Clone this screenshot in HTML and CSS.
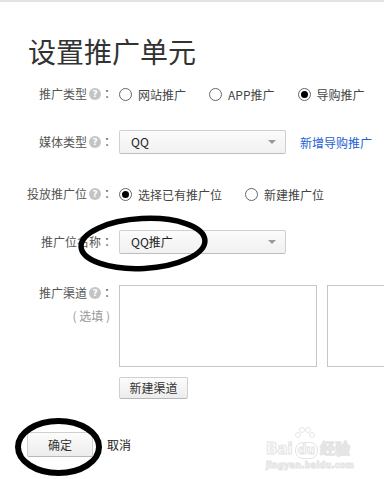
FILE: index.html
```html
<!DOCTYPE html>
<html lang="zh-CN">
<head>
  <meta charset="UTF-8">
  <meta name="viewport" content="width=device-width, initial-scale=1.0">
  <link rel="stylesheet" href="styles.css">
</head>
<body>
  <div class="page">
    <h1 class="title">设置推广单元</h1>

    <div class="form">
      <div class="row row-type">
        <div class="label">推广类型<span class="help">?</span><span class="colon">：</span></div>
        <div class="field">
          <label class="radio"><span class="dot"></span>网站推广</label>
          <label class="radio"><span class="dot"></span>APP推广</label>
          <label class="radio"><span class="dot checked"></span>导购推广</label>
        </div>
      </div>

      <div class="row row-media">
        <div class="label">媒体类型<span class="help">?</span><span class="colon">：</span></div>
        <div class="field">
          <div class="select">QQ<span class="arrow"></span></div>
          <a class="link" href="#">新增导购推广</a>
        </div>
      </div>

      <div class="row row-slot">
        <div class="label">投放推广位<span class="help">?</span><span class="colon">：</span></div>
        <div class="field">
          <label class="radio"><span class="dot checked"></span>选择已有推广位</label>
          <label class="radio"><span class="dot"></span>新建推广位</label>
        </div>
      </div>

      <div class="row row-name">
        <div class="label">推广位名称<span class="colon">：</span></div>
        <div class="field">
          <div class="select">QQ推广<span class="arrow"></span></div>
        </div>
      </div>

      <div class="row row-channel">
        <div class="label label-stack">
          <div>推广渠道<span class="help">?</span><span class="colon">：</span></div>
          <div class="optional">( 选填 )</div>
        </div>
        <div class="field field-stack">
          <div class="boxes">
            <div class="box"></div>
            <div class="box"></div>
          </div>
          <button class="btn btn-new">新建渠道</button>
        </div>
      </div>

      <div class="actions">
        <button class="btn btn-ok">确定</button>
        <a class="cancel" href="#">取消</a>
      </div>
    </div>

    <div class="watermark">
      <svg class="wm-paw" width="26" height="14" viewBox="0 0 26 14">
        <circle cx="6" cy="9" r="2.5" fill="none" stroke="#e6e6e6"/>
        <circle cx="10" cy="4" r="2.5" fill="none" stroke="#e6e6e6"/>
        <circle cx="16" cy="4" r="2.5" fill="none" stroke="#e6e6e6"/>
        <circle cx="20" cy="9" r="2.5" fill="none" stroke="#e6e6e6"/>
      </svg>
      <div class="wm-logo">Bai<span class="wm-du">du</span>经验</div>
      <div class="wm-url">jingyan.baidu.com</div>
    </div>

    <svg class="marks" width="384" height="479" viewBox="0 0 384 479">
      <ellipse cx="143" cy="241.5" rx="62" ry="25" transform="rotate(-3 143 241.5)" fill="none" stroke="#000" stroke-width="5.5"/>
      <ellipse cx="58.5" cy="445" rx="40.5" ry="26" fill="none" stroke="#000" stroke-width="6"/>
    </svg>
  </div>
</body>
</html>
```

FILE: styles.css
```css
body {
  margin: 0;
  font-family: "Noto Sans CJK SC", "Noto Sans", sans-serif;
  background: #ffffff;
  color: #333;
}

.page {
  position: relative;
  width: 384px;
  height: 479px;
  overflow: hidden;
  border-top: 2px solid #e2e2e2;
  box-sizing: border-box;
}

.title {
  margin: 33px 0 0 28px;
  font-size: 28px;
  font-weight: 400;
  line-height: 32px;
  color: #333;
}

.form {
  margin-top: 15px;
}

.row {
  display: flex;
  align-items: center;
  height: 24px;
  font-size: 12px;
}

.row-media { margin-top: 24px; }
.row-slot { margin-top: 28px; }
.row-name { margin-top: 24px; }

.row-channel {
  margin-top: 31px;
  height: auto;
  align-items: flex-start;
}

.label {
  width: 113px;
  flex-shrink: 0;
  display: flex;
  justify-content: flex-end;
  align-items: center;
  color: #555;
  line-height: 16px;
  white-space: nowrap;
}

.label-stack {
  flex-direction: column;
  align-items: flex-end;
  line-height: 16px;
}

.label-stack > div:first-child {
  display: flex;
  align-items: center;
}

.colon {
  width: 12px;
  text-align: center;
  font-family: "Noto Sans CJK TC", sans-serif;
}

.optional {
  margin-top: 7px;
  margin-right: 3px;
  color: #999;
}

.help {
  display: inline-block;
  width: 12px;
  height: 12px;
  margin-left: 2px;
  border-radius: 50%;
  background: #c4c4c4;
  color: #fff;
  font-family: "DejaVu Sans", sans-serif;
  font-size: 9px;
  font-weight: 700;
  line-height: 12px;
  text-align: center;
}

.field {
  display: flex;
  align-items: center;
  margin-left: 6px;
}

.field-stack {
  flex-direction: column;
  align-items: flex-start;
}

.radio {
  display: flex;
  align-items: center;
  flex-shrink: 0;
  margin-right: 23px;
  color: #444;
  white-space: nowrap;
}

.dot {
  position: relative;
  flex-shrink: 0;
  width: 11px;
  height: 11px;
  margin-right: 6px;
  border: 1px solid #666;
  border-radius: 50%;
  background: #fff;
}

.dot.checked::after {
  content: "";
  position: absolute;
  top: 2px;
  left: 2px;
  width: 7px;
  height: 7px;
  border-radius: 50%;
  background: #000;
}

.select {
  position: relative;
  box-sizing: border-box;
  width: 167px;
  height: 24px;
  padding-left: 11px;
  border: 1px solid #d0d0d0;
  border-bottom-color: #bdbdbd;
  border-radius: 2px;
  background: linear-gradient(#fbfbfb, #f1f1f1);
  color: #222;
  font-size: 12px;
  line-height: 22px;
}

.arrow {
  position: absolute;
  right: 9px;
  top: 9px;
  width: 0;
  height: 0;
  border-left: 4px solid transparent;
  border-right: 4px solid transparent;
  border-top: 4px solid #999;
}

.link {
  margin-left: 14px;
  color: #2262d6;
  text-decoration: none;
  white-space: nowrap;
}

.boxes {
  display: flex;
  gap: 10px;
}

.box {
  width: 196px;
  height: 80px;
  flex-shrink: 0;
  border: 1px solid #c6c6c6;
}

.btn {
  box-sizing: border-box;
  border: 1px solid #cfcfcf;
  border-bottom-color: #b8b8b8;
  border-radius: 2px;
  background: linear-gradient(#fcfcfc, #ececec);
  color: #333;
  font-family: "Noto Sans CJK SC", sans-serif;
  font-size: 12px;
  padding: 0;
}

.btn-new {
  margin-top: 10px;
  width: 69px;
  height: 22px;
  line-height: 20px;
}

.actions {
  display: flex;
  align-items: center;
  margin: 33px 0 0 27px;
}

.btn-ok {
  width: 66px;
  height: 25px;
  line-height: 23px;
}

.cancel {
  margin-left: 14px;
  color: #222;
  font-size: 12px;
  text-decoration: none;
}

.watermark {
  position: absolute;
  left: 266px;
  top: 424px;
  color: #fff;
  font-family: "DejaVu Sans", sans-serif;
  -webkit-text-stroke: 1px #e4e4e4;
}

.wm-paw {
  display: block;
  margin-left: 26px;
}

.wm-logo {
  font-size: 15px;
  font-weight: 700;
  line-height: 18px;
  white-space: nowrap;
}

.wm-du {
  display: inline-block;
  margin: 0 2px;
  padding: 0 2px;
  border: 1px solid #e4e4e4;
  border-radius: 8px;
  font-size: 12px;
  line-height: 15px;
}

.wm-url {
  margin-top: 2px;
  font-size: 8px;
  font-weight: 700;
  line-height: 10px;
  letter-spacing: 0.3px;
}

.marks {
  position: absolute;
  top: 0;
  left: 0;
  pointer-events: none;
}
```
